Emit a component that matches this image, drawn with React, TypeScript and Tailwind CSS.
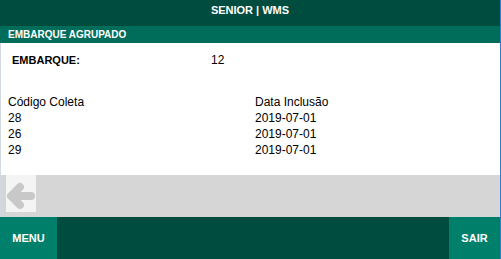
export default function App() {
  const rows = [
    { codigo: '28', data: '2019-07-01' },
    { codigo: '26', data: '2019-07-01' },
    { codigo: '29', data: '2019-07-01' },
  ];

  return (
    <div className="w-[501px] h-[259px] flex flex-col border-r border-[#2f7fd1] font-['Liberation_Sans',Arial,sans-serif] text-black overflow-hidden">
      <div className="h-[26px] bg-[#004d40] text-white text-[11px] font-bold leading-[13px] pt-1 text-center">
        SENIOR | WMS
      </div>
      <div className="h-[17px] bg-[#006d5b] text-white text-[10px] font-bold leading-[17px] pl-2">
        EMBARQUE AGRUPADO
      </div>

      <div className="h-[132px] bg-white border-l border-[#d3d9e4]">
        <div className="flex text-[11px] leading-4 mt-[9px]">
          <span className="w-[210px] pl-[11px] font-bold">EMBARQUE:</span>
          <span className="text-[12px]">12</span>
        </div>
        <div className="mt-[26px] text-[12px] leading-4">
          <div className="grid grid-cols-[247px_1fr] pl-[7px]">
            <span>Código Coleta</span>
            <span>Data Inclusão</span>
          </div>
          {rows.map((r, i) => (
            <div key={i} className="grid grid-cols-[247px_1fr] pl-[7px]">
              <span>{r.codigo}</span>
              <span>{r.data}</span>
            </div>
          ))}
        </div>
      </div>

      <div className="h-[42px] bg-[#d6d6d6] border-l border-[#d3d9e4] pl-[5px]">
        <div className="w-[30px] h-[37px] bg-[#f4f4f4]">
          <svg width="30" height="37" viewBox="0 0 30 37">
            <path
              d="M25 21 H6 M14 12 L5 21 L14 30"
              fill="none"
              stroke="#c8c8c8"
              strokeWidth="8"
              strokeLinecap="round"
              strokeLinejoin="round"
            />
          </svg>
        </div>
      </div>

      <div className="flex-1 bg-[#004d40] flex">
        <button className="w-[57px] h-full bg-[#007f6b] text-white text-[11px] font-bold">MENU</button>
        <div className="flex-1" />
        <button className="w-[51px] h-full bg-[#007f6b] text-white text-[11px] font-bold">SAIR</button>
      </div>
    </div>
  );
}
